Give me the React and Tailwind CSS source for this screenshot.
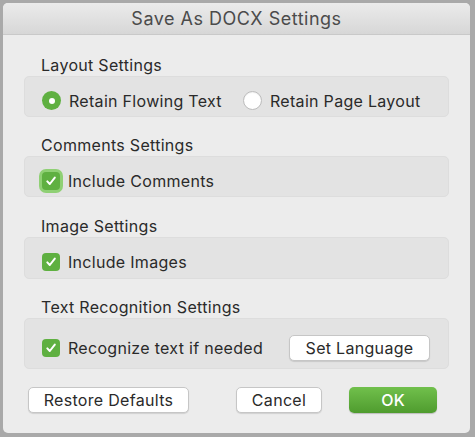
import React from 'react';

const font = { fontFamily: 'Inter, "Liberation Sans", sans-serif' };

// small mac-like controls
const Radio = ({ on }) =>
  on ? (
    <span className="flex h-[19px] w-[19px] shrink-0 items-center justify-center rounded-full bg-[#5fb041]">
      <span className="h-[6px] w-[6px] rounded-full bg-white" />
    </span>
  ) : (
    <span className="h-[19px] w-[19px] shrink-0 rounded-full border border-[#bcbcbc] bg-white shadow-[inset_0_1px_1px_rgba(0,0,0,0.06)]" />
  );

const Check = ({ focus }) => (
  <span
    className={`flex h-[18px] w-[18px] shrink-0 items-center justify-center rounded-[4px] bg-[#5fb041] ${
      focus ? 'ring-[3px] ring-[#8fd074]' : ''
    }`}
  >
    <svg width="12" height="12" viewBox="0 0 12 12" fill="none">
      <path d="M2.3 6.4 L4.8 9 L9.8 2.6" stroke="white" strokeWidth="2" strokeLinecap="round" strokeLinejoin="round" />
    </svg>
  </span>
);

const Section = ({ title, className = '', boxClass = 'h-[41px]', children }) => (
  <div className={className}>
    <div className="h-5 pl-[38px] text-[16px] leading-5 tracking-[0.3px] text-[#2a2a2a]">{title}</div>
    <div
      className={`mx-[21px] mt-[1px] flex items-center rounded-[5px] border border-[#dddddd] bg-[#e3e3e3] pl-[17px] pt-[8px] ${boxClass}`}
    >
      {children}
    </div>
  </div>
);

const Btn = ({ children, className = '' }) => (
  <button
    className={`h-[26px] rounded-[5px] border border-[#c6c6c6] bg-white text-[16px] tracking-[0.3px] text-[#2a2a2a] shadow-[0_1px_1px_rgba(0,0,0,0.12)] ${className}`}
  >
    {children}
  </button>
);

const item = 'flex items-center gap-2 whitespace-nowrap text-[16px] tracking-[0.3px] text-[#2a2a2a]';

export default function App() {
  return (
    <div className="h-[437px] w-[475px] bg-[#a9a9a9] pl-[3px] pt-[3px]" style={font}>
      <div className="flex h-[430px] w-[467px] flex-col overflow-hidden rounded-[5px] bg-[#ececec]">
        <div className="flex h-[32px] shrink-0 items-center justify-center border-b border-[#c9c9c9] bg-gradient-to-b from-[#ebebeb] to-[#d7d7d7] text-[18px] tracking-[0.5px] text-[#4b4b4b]">
          Save As DOCX Settings
        </div>

        <Section title="Layout Settings" className="mt-[20px]">
          <div className={`${item} w-[201px]`}>
            <Radio on />
            Retain Flowing Text
          </div>
          <div className={item}>
            <Radio />
            Retain Page Layout
          </div>
        </Section>

        <Section title="Comments Settings" className="mt-[18px]">
          <div className={item}>
            <Check focus />
            Include Comments
          </div>
        </Section>

        <Section title="Image Settings" className="mt-[19px]" boxClass="h-[42px]">
          <div className={item}>
            <Check />
            Include Images
          </div>
        </Section>

        <Section title="Text Recognition Settings" className="mt-[18px]" boxClass="h-[51px]">
          <div className={`${item} w-[247px]`}>
            <Check />
            Recognize text if needed
          </div>
          <Btn className="w-[141px]">Set Language</Btn>
        </Section>

        <div className="mt-[18px] flex pl-[25px]">
          <Btn className="w-[161px]">Restore Defaults</Btn>
          <Btn className="ml-[47px] w-[86px]">Cancel</Btn>
          <button className="ml-[27px] h-[26px] w-[88px] rounded-[5px] bg-gradient-to-b from-[#71c04c] to-[#4f9c2e] text-[16px] font-medium text-white shadow-[0_1px_1px_rgba(0,0,0,0.2)]">
            OK
          </button>
        </div>
      </div>
    </div>
  );
}
